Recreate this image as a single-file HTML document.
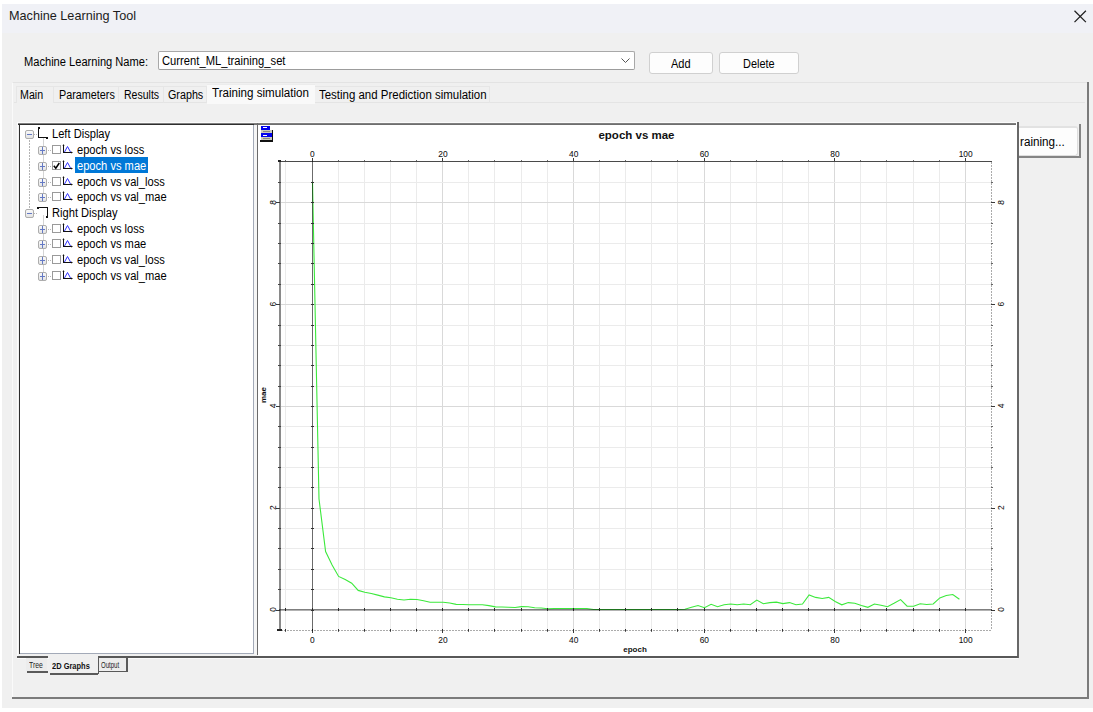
<!DOCTYPE html>
<html><head><meta charset="utf-8">
<style>
html,body{margin:0;padding:0;width:1093px;height:712px;overflow:hidden;background:#fff;position:relative;font-family:"Liberation Sans",sans-serif;}
.a{position:absolute;}
.t{position:absolute;white-space:pre;font-size:12px;line-height:14px;color:#000;}
.tr{transform:scaleX(0.927);transform-origin:0 0}
</style></head><body>
<!-- window -->
<div class="a" style="left:2px;top:4px;width:1091px;height:29px;background:#f0f1f6"></div>
<div class="a" style="left:2px;top:33px;width:1091px;height:675px;background:#f0f0f0"></div>
<div class="t" style="left:9px;top:8.3px;font-size:13px;line-height:16px;transform:scaleX(0.973);transform-origin:0 0;color:#1c1c1c">Machine Learning Tool</div>
<svg class="a" style="left:1072px;top:8px" width="17" height="17" viewBox="0 0 17 17"><path d="M2.5 2.7 L13.9 14.1 M13.9 2.7 L2.5 14.1" stroke="#202020" stroke-width="1.25" fill="none"/></svg>

<!-- name row -->
<div class="t" style="left:23.5px;top:54.6px;transform:scaleX(0.925);transform-origin:0 0">Machine Learning Name:</div>
<div class="a" style="left:158px;top:51px;width:475px;height:17px;background:#fff;border:1px solid #a8a8a8;border-bottom:1.5px solid #9c9c9c;border-radius:2px"></div>
<div class="t" style="left:161.5px;top:53.7px;transform:scaleX(0.935);transform-origin:0 0">Current_ML_training_set</div>
<svg class="a" style="left:620px;top:56px" width="11" height="9"><path d="M1.5 2.5 L5.5 6.5 L9.5 2.5" stroke="#555" stroke-width="1" fill="none"/></svg>
<div class="a" style="left:649px;top:52px;width:62px;height:20px;background:#fdfdfd;border:1px solid #d0d0d0;border-radius:3px"></div>
<div class="t" style="left:671px;top:56.5px;transform:scaleX(0.92);transform-origin:0 0">Add</div>
<div class="a" style="left:719px;top:52px;width:78px;height:20px;background:#fdfdfd;border:1px solid #d0d0d0;border-radius:3px"></div>
<div class="t" style="left:743px;top:56.5px;transform:scaleX(0.91);transform-origin:0 0">Delete</div>

<!-- tab control -->
<div class="a" style="left:12px;top:82px;width:1076px;height:616px;border-top:1px solid #e3e3e3;border-left:1px solid #fafafa"></div>
<div class="a" style="left:1087px;top:82px;width:2px;height:617px;background:#7b7b7b"></div>
<div class="a" style="left:12px;top:697px;width:1077px;height:2px;background:#7b7b7b"></div>
<div class="a" style="left:14px;top:102px;width:1071px;height:1px;background:#e4e4e4"></div>
<!-- tabs -->
<div class="a" style="left:16px;top:86px;width:36px;height:16px;background:#f0f0f0;border-left:1px solid #e6e6e6;border-right:1px solid #e6e6e6;border-top:1px solid #e6e6e6"></div>
<div class="a" style="left:53px;top:86px;width:65px;height:16px;border-right:1px solid #e6e6e6;border-top:1px solid #e6e6e6"></div>
<div class="a" style="left:118px;top:86px;width:45px;height:16px;border-right:1px solid #e6e6e6;border-top:1px solid #e6e6e6"></div>
<div class="a" style="left:163px;top:86px;width:43px;height:16px;border-right:1px solid #e6e6e6;border-top:1px solid #e6e6e6"></div>
<div class="a" style="left:207px;top:84px;width:108px;height:19px;background:#f9f9f9;border-top:1px solid #ececec"></div>
<div class="a" style="left:315px;top:86px;width:174px;height:16px;border-right:1px solid #e6e6e6;border-top:1px solid #e6e6e6"></div>
<div class="t" style="left:19.8px;top:87.6px;transform:scaleX(0.888);transform-origin:0 0">Main</div>
<div class="t" style="left:58.6px;top:87.6px;transform:scaleX(0.90);transform-origin:0 0">Parameters</div>
<div class="t" style="left:123.5px;top:87.6px;transform:scaleX(0.877);transform-origin:0 0">Results</div>
<div class="t" style="left:167.8px;top:87.6px;transform:scaleX(0.895);transform-origin:0 0">Graphs</div>
<div class="t" style="left:212px;top:85.8px;transform:scaleX(0.967);transform-origin:0 0">Training simulation</div>
<div class="t" style="left:318.5px;top:87.5px;transform:scaleX(0.955);transform-origin:0 0">Testing and Prediction simulation</div>

<!-- Training button (behind chart) -->
<div class="a" style="left:1000px;top:124px;width:81px;height:34px;background:#858585"></div>
<div class="a" style="left:1000px;top:124px;width:79px;height:32px;background:#f0f0f0"></div>
<div class="a" style="left:1000px;top:126px;width:76px;height:27px;background:#fdfdfd;border:1px solid #dedede;border-top:2px solid #e2e2e2;border-radius:3px"></div>
<div class="t" style="left:1020px;top:134.5px;transform:scaleX(0.973);transform-origin:0 0">raining...</div>
<!-- tree panel -->
<div class="a" style="left:17px;top:122px;width:1000px;height:1px;background:#fbfbfb"></div>
<div class="a" style="left:17px;top:122px;width:1px;height:536px;background:#fbfbfb"></div>
<div class="a" style="left:18px;top:123px;width:999px;height:1px;background:#808080"></div>
<div class="a" style="left:18px;top:124px;width:236px;height:1px;background:#2e2e2e"></div>
<div class="a" style="left:19px;top:124px;width:1px;height:530px;background:#2e2e2e"></div>
<div class="a" style="left:20px;top:125px;width:233px;height:528px;background:#fff"></div>
<div class="a" style="left:253px;top:125px;width:1px;height:529px;background:#a3aab8"></div>
<div class="a" style="left:20px;top:653px;width:234px;height:1px;background:#a3aab8"></div>
<div class="a" style="left:254px;top:124px;width:3px;height:531px;background:#f5f5f5"></div>
<!--TREE-->
<svg class="a" style="left:0;top:0" width="260" height="300" shape-rendering="crispEdges"><defs><linearGradient id="eg" x1="0" y1="0" x2="0" y2="1"><stop offset="0" stop-color="#fafafa"/><stop offset="1" stop-color="#e2e2e2"/></linearGradient></defs><line x1="29.5" y1="140" x2="29.5" y2="209" stroke="#b4b4b4" stroke-dasharray="2,1"/><rect x="43" y="137" width="1" height="10" fill="#d4d4d4"/><rect x="43" y="152" width="1" height="10" fill="#d4d4d4"/><rect x="43" y="167" width="1" height="11" fill="#d4d4d4"/><rect x="43" y="183" width="1" height="11" fill="#d4d4d4"/><rect x="43" y="215" width="1" height="10" fill="#d4d4d4"/><rect x="43" y="230" width="1" height="11" fill="#d4d4d4"/><rect x="43" y="246" width="1" height="10" fill="#d4d4d4"/><rect x="43" y="261" width="1" height="11" fill="#d4d4d4"/><rect x="25.5" y="130.5" width="8" height="8" rx="1.5" fill="url(#eg)" stroke="#adadad" shape-rendering="auto"/><rect x="27" y="134" width="5" height="1" fill="#6479c4"/><rect x="34" y="134" width="1" height="1" fill="#b8b8b8"/><rect x="36" y="134" width="1" height="1" fill="#b8b8b8"/><path d="M38.5 128 V137.5 H47.5" fill="none" stroke="#111" stroke-width="1"/><rect x="38" y="127" width="2" height="2" fill="#111"/><rect x="46" y="137" width="2" height="2" fill="#111"/><rect x="38.5" y="146.5" width="8" height="8" rx="1.5" fill="url(#eg)" stroke="#adadad" shape-rendering="auto"/><rect x="40" y="150" width="5" height="1" fill="#6479c4"/><rect x="42" y="147" width="1" height="7" fill="#6479c4"/><rect x="48" y="150" width="1" height="1" fill="#b8b8b8"/><rect x="50" y="150" width="1" height="1" fill="#b8b8b8"/><rect x="52.5" y="145.5" width="8" height="8" fill="#fff" stroke="#9a9a9a"/><path d="M63.5 145 V152.5 H71.5" fill="none" stroke="#111" stroke-width="1"/><path d="M62.5 146 L63.5 144 L64.5 146 Z M71 151.5 L73 152.5 L71 153.5 Z" fill="#111" shape-rendering="auto"/><path d="M64.5 152 L67.5 146.5 L70.5 152" fill="none" stroke="#3030ff" stroke-width="1" shape-rendering="auto"/><rect x="38.5" y="162.5" width="8" height="8" rx="1.5" fill="url(#eg)" stroke="#adadad" shape-rendering="auto"/><rect x="40" y="166" width="5" height="1" fill="#6479c4"/><rect x="42" y="163" width="1" height="7" fill="#6479c4"/><rect x="48" y="166" width="1" height="1" fill="#b8b8b8"/><rect x="50" y="166" width="1" height="1" fill="#b8b8b8"/><rect x="52.5" y="161.5" width="8" height="8" fill="#fff" stroke="#9a9a9a"/><path d="M53.8 165.7 L55.8 168.2 L59.3 163" fill="none" stroke="#000" stroke-width="1.5" shape-rendering="auto"/><path d="M63.5 161 V168.5 H71.5" fill="none" stroke="#111" stroke-width="1"/><path d="M62.5 162 L63.5 160 L64.5 162 Z M71 167.5 L73 168.5 L71 169.5 Z" fill="#111" shape-rendering="auto"/><path d="M64.5 168 L67.5 162.5 L70.5 168" fill="none" stroke="#3030ff" stroke-width="1" shape-rendering="auto"/><rect x="38.5" y="178.5" width="8" height="8" rx="1.5" fill="url(#eg)" stroke="#adadad" shape-rendering="auto"/><rect x="40" y="182" width="5" height="1" fill="#6479c4"/><rect x="42" y="179" width="1" height="7" fill="#6479c4"/><rect x="48" y="182" width="1" height="1" fill="#b8b8b8"/><rect x="50" y="182" width="1" height="1" fill="#b8b8b8"/><rect x="52.5" y="177.5" width="8" height="8" fill="#fff" stroke="#9a9a9a"/><path d="M63.5 177 V184.5 H71.5" fill="none" stroke="#111" stroke-width="1"/><path d="M62.5 178 L63.5 176 L64.5 178 Z M71 183.5 L73 184.5 L71 185.5 Z" fill="#111" shape-rendering="auto"/><path d="M64.5 184 L67.5 178.5 L70.5 184" fill="none" stroke="#3030ff" stroke-width="1" shape-rendering="auto"/><rect x="38.5" y="193.5" width="8" height="8" rx="1.5" fill="url(#eg)" stroke="#adadad" shape-rendering="auto"/><rect x="40" y="197" width="5" height="1" fill="#6479c4"/><rect x="42" y="194" width="1" height="7" fill="#6479c4"/><rect x="48" y="197" width="1" height="1" fill="#b8b8b8"/><rect x="50" y="197" width="1" height="1" fill="#b8b8b8"/><rect x="52.5" y="192.5" width="8" height="8" fill="#fff" stroke="#9a9a9a"/><path d="M63.5 192 V199.5 H71.5" fill="none" stroke="#111" stroke-width="1"/><path d="M62.5 193 L63.5 191 L64.5 193 Z M71 198.5 L73 199.5 L71 200.5 Z" fill="#111" shape-rendering="auto"/><path d="M64.5 199 L67.5 193.5 L70.5 199" fill="none" stroke="#3030ff" stroke-width="1" shape-rendering="auto"/><rect x="25.5" y="209.5" width="8" height="8" rx="1.5" fill="url(#eg)" stroke="#adadad" shape-rendering="auto"/><rect x="27" y="213" width="5" height="1" fill="#6479c4"/><rect x="34" y="213" width="1" height="1" fill="#b8b8b8"/><rect x="36" y="213" width="1" height="1" fill="#b8b8b8"/><path d="M38 207.5 H47.5 V216" fill="none" stroke="#111" stroke-width="1"/><rect x="37" y="207" width="2" height="2" fill="#111"/><rect x="46" y="216" width="2" height="2" fill="#111"/><rect x="38.5" y="225.5" width="8" height="8" rx="1.5" fill="url(#eg)" stroke="#adadad" shape-rendering="auto"/><rect x="40" y="229" width="5" height="1" fill="#6479c4"/><rect x="42" y="226" width="1" height="7" fill="#6479c4"/><rect x="48" y="229" width="1" height="1" fill="#b8b8b8"/><rect x="50" y="229" width="1" height="1" fill="#b8b8b8"/><rect x="52.5" y="224.5" width="8" height="8" fill="#fff" stroke="#9a9a9a"/><path d="M63.5 224 V231.5 H71.5" fill="none" stroke="#111" stroke-width="1"/><path d="M62.5 225 L63.5 223 L64.5 225 Z M71 230.5 L73 231.5 L71 232.5 Z" fill="#111" shape-rendering="auto"/><path d="M64.5 231 L67.5 225.5 L70.5 231" fill="none" stroke="#3030ff" stroke-width="1" shape-rendering="auto"/><rect x="38.5" y="240.5" width="8" height="8" rx="1.5" fill="url(#eg)" stroke="#adadad" shape-rendering="auto"/><rect x="40" y="244" width="5" height="1" fill="#6479c4"/><rect x="42" y="241" width="1" height="7" fill="#6479c4"/><rect x="48" y="244" width="1" height="1" fill="#b8b8b8"/><rect x="50" y="244" width="1" height="1" fill="#b8b8b8"/><rect x="52.5" y="239.5" width="8" height="8" fill="#fff" stroke="#9a9a9a"/><path d="M63.5 239 V246.5 H71.5" fill="none" stroke="#111" stroke-width="1"/><path d="M62.5 240 L63.5 238 L64.5 240 Z M71 245.5 L73 246.5 L71 247.5 Z" fill="#111" shape-rendering="auto"/><path d="M64.5 246 L67.5 240.5 L70.5 246" fill="none" stroke="#3030ff" stroke-width="1" shape-rendering="auto"/><rect x="38.5" y="256.5" width="8" height="8" rx="1.5" fill="url(#eg)" stroke="#adadad" shape-rendering="auto"/><rect x="40" y="260" width="5" height="1" fill="#6479c4"/><rect x="42" y="257" width="1" height="7" fill="#6479c4"/><rect x="48" y="260" width="1" height="1" fill="#b8b8b8"/><rect x="50" y="260" width="1" height="1" fill="#b8b8b8"/><rect x="52.5" y="255.5" width="8" height="8" fill="#fff" stroke="#9a9a9a"/><path d="M63.5 255 V262.5 H71.5" fill="none" stroke="#111" stroke-width="1"/><path d="M62.5 256 L63.5 254 L64.5 256 Z M71 261.5 L73 262.5 L71 263.5 Z" fill="#111" shape-rendering="auto"/><path d="M64.5 262 L67.5 256.5 L70.5 262" fill="none" stroke="#3030ff" stroke-width="1" shape-rendering="auto"/><rect x="38.5" y="272.5" width="8" height="8" rx="1.5" fill="url(#eg)" stroke="#adadad" shape-rendering="auto"/><rect x="40" y="276" width="5" height="1" fill="#6479c4"/><rect x="42" y="273" width="1" height="7" fill="#6479c4"/><rect x="48" y="276" width="1" height="1" fill="#b8b8b8"/><rect x="50" y="276" width="1" height="1" fill="#b8b8b8"/><rect x="52.5" y="271.5" width="8" height="8" fill="#fff" stroke="#9a9a9a"/><path d="M63.5 271 V278.5 H71.5" fill="none" stroke="#111" stroke-width="1"/><path d="M62.5 272 L63.5 270 L64.5 272 Z M71 277.5 L73 278.5 L71 279.5 Z" fill="#111" shape-rendering="auto"/><path d="M64.5 278 L67.5 272.5 L70.5 278" fill="none" stroke="#3030ff" stroke-width="1" shape-rendering="auto"/></svg>
<div class="t tr" style="left:52px;top:127.4px">Left Display</div>
<div class="t tr" style="left:77px;top:143.1px">epoch vs loss</div>
<div class="a" style="left:75px;top:157px;width:73px;height:16px;background:#0078d7"></div>
<div class="t tr" style="left:77px;top:158.8px;color:#fff">epoch vs mae</div>
<div class="t tr" style="left:77px;top:174.5px">epoch vs val_loss</div>
<div class="t tr" style="left:77px;top:190.1px">epoch vs val_mae</div>
<div class="t tr" style="left:52px;top:205.8px">Right Display</div>
<div class="t tr" style="left:77px;top:221.5px">epoch vs loss</div>
<div class="t tr" style="left:77px;top:237.1px">epoch vs mae</div>
<div class="t tr" style="left:77px;top:252.8px">epoch vs val_loss</div>
<div class="t tr" style="left:77px;top:268.5px">epoch vs val_mae</div>
<!--/TREE-->
<!-- chart panel -->
<div class="a" style="left:258px;top:125px;width:758px;height:531px;background:#fff"></div>
<div class="a" style="left:254px;top:124px;width:762px;height:1px;background:#6e6e6e"></div>
<div class="a" style="left:257px;top:123px;width:1px;height:532px;background:#6a6a6a"></div>
<div class="a" style="left:1016px;top:122px;width:1px;height:536px;background:#fff"></div><div class="a" style="left:1017px;top:122px;width:2px;height:536px;background:#686868"></div>
<div class="a" style="left:17px;top:656px;width:1001px;height:2px;background:#585858"></div>
<div class="a" style="left:17px;top:658px;width:1001px;height:1px;background:#fafafa"></div>
<!--CHART-->
<svg class="a" style="left:0;top:0" width="1093" height="712" shape-rendering="crispEdges">
<style>.tk{font:8.4px "Liberation Sans",sans-serif;fill:#111;stroke:#111;stroke-width:0.06px}.ti{font:bold 11.5px "Liberation Sans",sans-serif;fill:#111}.al{font:bold 8px "Liberation Sans",sans-serif;fill:#111}</style>
<rect x="285" y="162" width="1" height="468" fill="#ebebeb"/>
<rect x="338" y="162" width="1" height="468" fill="#ebebeb"/>
<rect x="364" y="162" width="1" height="468" fill="#ebebeb"/>
<rect x="390" y="162" width="1" height="468" fill="#ebebeb"/>
<rect x="416" y="162" width="1" height="468" fill="#ebebeb"/>
<rect x="442" y="162" width="1" height="468" fill="#d9d9d9"/>
<rect x="468" y="162" width="1" height="468" fill="#ebebeb"/>
<rect x="494" y="162" width="1" height="468" fill="#ebebeb"/>
<rect x="521" y="162" width="1" height="468" fill="#ebebeb"/>
<rect x="547" y="162" width="1" height="468" fill="#ebebeb"/>
<rect x="573" y="162" width="1" height="468" fill="#d9d9d9"/>
<rect x="599" y="162" width="1" height="468" fill="#ebebeb"/>
<rect x="625" y="162" width="1" height="468" fill="#ebebeb"/>
<rect x="651" y="162" width="1" height="468" fill="#ebebeb"/>
<rect x="677" y="162" width="1" height="468" fill="#ebebeb"/>
<rect x="704" y="162" width="1" height="468" fill="#d9d9d9"/>
<rect x="730" y="162" width="1" height="468" fill="#ebebeb"/>
<rect x="756" y="162" width="1" height="468" fill="#ebebeb"/>
<rect x="782" y="162" width="1" height="468" fill="#ebebeb"/>
<rect x="808" y="162" width="1" height="468" fill="#ebebeb"/>
<rect x="834" y="162" width="1" height="468" fill="#d9d9d9"/>
<rect x="860" y="162" width="1" height="468" fill="#ebebeb"/>
<rect x="886" y="162" width="1" height="468" fill="#ebebeb"/>
<rect x="913" y="162" width="1" height="468" fill="#ebebeb"/>
<rect x="939" y="162" width="1" height="468" fill="#ebebeb"/>
<rect x="965" y="162" width="1" height="468" fill="#d9d9d9"/>
<rect x="281" y="589" width="710" height="1" fill="#ebebeb"/>
<rect x="281" y="569" width="710" height="1" fill="#ebebeb"/>
<rect x="281" y="548" width="710" height="1" fill="#ebebeb"/>
<rect x="281" y="528" width="710" height="1" fill="#ebebeb"/>
<rect x="281" y="508" width="710" height="1" fill="#d9d9d9"/>
<rect x="281" y="487" width="710" height="1" fill="#ebebeb"/>
<rect x="281" y="467" width="710" height="1" fill="#ebebeb"/>
<rect x="281" y="447" width="710" height="1" fill="#ebebeb"/>
<rect x="281" y="426" width="710" height="1" fill="#ebebeb"/>
<rect x="281" y="406" width="710" height="1" fill="#d9d9d9"/>
<rect x="281" y="386" width="710" height="1" fill="#ebebeb"/>
<rect x="281" y="365" width="710" height="1" fill="#ebebeb"/>
<rect x="281" y="345" width="710" height="1" fill="#ebebeb"/>
<rect x="281" y="325" width="710" height="1" fill="#ebebeb"/>
<rect x="281" y="304" width="710" height="1" fill="#d9d9d9"/>
<rect x="281" y="284" width="710" height="1" fill="#ebebeb"/>
<rect x="281" y="263" width="710" height="1" fill="#ebebeb"/>
<rect x="281" y="243" width="710" height="1" fill="#ebebeb"/>
<rect x="281" y="223" width="710" height="1" fill="#ebebeb"/>
<rect x="281" y="202" width="710" height="1" fill="#d9d9d9"/>
<rect x="281" y="182" width="710" height="1" fill="#ebebeb"/>
<rect x="279" y="161" width="713" height="1" fill="#4a4a4a"/>
<rect x="279" y="161" width="2" height="470" fill="#8a8a8a"/>
<line x1="991.5" y1="162" x2="991.5" y2="630" stroke="#ababab" stroke-width="1" stroke-dasharray="2,1"/>
<line x1="281" y1="630.5" x2="991" y2="630.5" stroke="#ababab" stroke-width="1" stroke-dasharray="2,1"/>
<rect x="285" y="160" width="1" height="1" fill="#6a6a6a"/>
<rect x="285" y="631" width="1" height="1" fill="#6a6a6a"/>
<rect x="285" y="629" width="1" height="2" fill="#333"/>
<rect x="312" y="158" width="1" height="3" fill="#3a3a3a"/>
<rect x="312" y="630" width="1" height="3" fill="#3a3a3a"/>
<rect x="312" y="629" width="1" height="2" fill="#333"/>
<rect x="338" y="160" width="1" height="1" fill="#6a6a6a"/>
<rect x="338" y="631" width="1" height="1" fill="#6a6a6a"/>
<rect x="338" y="629" width="1" height="2" fill="#333"/>
<rect x="364" y="160" width="1" height="1" fill="#6a6a6a"/>
<rect x="364" y="631" width="1" height="1" fill="#6a6a6a"/>
<rect x="364" y="629" width="1" height="2" fill="#333"/>
<rect x="390" y="160" width="1" height="1" fill="#6a6a6a"/>
<rect x="390" y="631" width="1" height="1" fill="#6a6a6a"/>
<rect x="390" y="629" width="1" height="2" fill="#333"/>
<rect x="416" y="160" width="1" height="1" fill="#6a6a6a"/>
<rect x="416" y="631" width="1" height="1" fill="#6a6a6a"/>
<rect x="416" y="629" width="1" height="2" fill="#333"/>
<rect x="442" y="158" width="1" height="3" fill="#3a3a3a"/>
<rect x="442" y="630" width="1" height="3" fill="#3a3a3a"/>
<rect x="442" y="629" width="1" height="2" fill="#333"/>
<rect x="468" y="160" width="1" height="1" fill="#6a6a6a"/>
<rect x="468" y="631" width="1" height="1" fill="#6a6a6a"/>
<rect x="468" y="629" width="1" height="2" fill="#333"/>
<rect x="494" y="160" width="1" height="1" fill="#6a6a6a"/>
<rect x="494" y="631" width="1" height="1" fill="#6a6a6a"/>
<rect x="494" y="629" width="1" height="2" fill="#333"/>
<rect x="521" y="160" width="1" height="1" fill="#6a6a6a"/>
<rect x="521" y="631" width="1" height="1" fill="#6a6a6a"/>
<rect x="521" y="629" width="1" height="2" fill="#333"/>
<rect x="547" y="160" width="1" height="1" fill="#6a6a6a"/>
<rect x="547" y="631" width="1" height="1" fill="#6a6a6a"/>
<rect x="547" y="629" width="1" height="2" fill="#333"/>
<rect x="573" y="158" width="1" height="3" fill="#3a3a3a"/>
<rect x="573" y="630" width="1" height="3" fill="#3a3a3a"/>
<rect x="573" y="629" width="1" height="2" fill="#333"/>
<rect x="599" y="160" width="1" height="1" fill="#6a6a6a"/>
<rect x="599" y="631" width="1" height="1" fill="#6a6a6a"/>
<rect x="599" y="629" width="1" height="2" fill="#333"/>
<rect x="625" y="160" width="1" height="1" fill="#6a6a6a"/>
<rect x="625" y="631" width="1" height="1" fill="#6a6a6a"/>
<rect x="625" y="629" width="1" height="2" fill="#333"/>
<rect x="651" y="160" width="1" height="1" fill="#6a6a6a"/>
<rect x="651" y="631" width="1" height="1" fill="#6a6a6a"/>
<rect x="651" y="629" width="1" height="2" fill="#333"/>
<rect x="677" y="160" width="1" height="1" fill="#6a6a6a"/>
<rect x="677" y="631" width="1" height="1" fill="#6a6a6a"/>
<rect x="677" y="629" width="1" height="2" fill="#333"/>
<rect x="704" y="158" width="1" height="3" fill="#3a3a3a"/>
<rect x="704" y="630" width="1" height="3" fill="#3a3a3a"/>
<rect x="704" y="629" width="1" height="2" fill="#333"/>
<rect x="730" y="160" width="1" height="1" fill="#6a6a6a"/>
<rect x="730" y="631" width="1" height="1" fill="#6a6a6a"/>
<rect x="730" y="629" width="1" height="2" fill="#333"/>
<rect x="756" y="160" width="1" height="1" fill="#6a6a6a"/>
<rect x="756" y="631" width="1" height="1" fill="#6a6a6a"/>
<rect x="756" y="629" width="1" height="2" fill="#333"/>
<rect x="782" y="160" width="1" height="1" fill="#6a6a6a"/>
<rect x="782" y="631" width="1" height="1" fill="#6a6a6a"/>
<rect x="782" y="629" width="1" height="2" fill="#333"/>
<rect x="808" y="160" width="1" height="1" fill="#6a6a6a"/>
<rect x="808" y="631" width="1" height="1" fill="#6a6a6a"/>
<rect x="808" y="629" width="1" height="2" fill="#333"/>
<rect x="834" y="158" width="1" height="3" fill="#3a3a3a"/>
<rect x="834" y="630" width="1" height="3" fill="#3a3a3a"/>
<rect x="834" y="629" width="1" height="2" fill="#333"/>
<rect x="860" y="160" width="1" height="1" fill="#6a6a6a"/>
<rect x="860" y="631" width="1" height="1" fill="#6a6a6a"/>
<rect x="860" y="629" width="1" height="2" fill="#333"/>
<rect x="886" y="160" width="1" height="1" fill="#6a6a6a"/>
<rect x="886" y="631" width="1" height="1" fill="#6a6a6a"/>
<rect x="886" y="629" width="1" height="2" fill="#333"/>
<rect x="913" y="160" width="1" height="1" fill="#6a6a6a"/>
<rect x="913" y="631" width="1" height="1" fill="#6a6a6a"/>
<rect x="913" y="629" width="1" height="2" fill="#333"/>
<rect x="939" y="160" width="1" height="1" fill="#6a6a6a"/>
<rect x="939" y="631" width="1" height="1" fill="#6a6a6a"/>
<rect x="939" y="629" width="1" height="2" fill="#333"/>
<rect x="965" y="158" width="1" height="3" fill="#3a3a3a"/>
<rect x="965" y="630" width="1" height="3" fill="#3a3a3a"/>
<rect x="965" y="629" width="1" height="2" fill="#333"/>
<rect x="276" y="610" width="4" height="1" fill="#3a3a3a"/>
<rect x="991" y="610" width="4" height="1" fill="#3a3a3a"/>
<rect x="278" y="589" width="3" height="1" fill="#444"/>
<rect x="991" y="589" width="2" height="1" fill="#666"/>
<rect x="278" y="569" width="3" height="1" fill="#444"/>
<rect x="991" y="569" width="2" height="1" fill="#666"/>
<rect x="278" y="548" width="3" height="1" fill="#444"/>
<rect x="991" y="548" width="2" height="1" fill="#666"/>
<rect x="278" y="528" width="3" height="1" fill="#444"/>
<rect x="991" y="528" width="2" height="1" fill="#666"/>
<rect x="276" y="508" width="4" height="1" fill="#3a3a3a"/>
<rect x="991" y="508" width="4" height="1" fill="#3a3a3a"/>
<rect x="278" y="487" width="3" height="1" fill="#444"/>
<rect x="991" y="487" width="2" height="1" fill="#666"/>
<rect x="278" y="467" width="3" height="1" fill="#444"/>
<rect x="991" y="467" width="2" height="1" fill="#666"/>
<rect x="278" y="447" width="3" height="1" fill="#444"/>
<rect x="991" y="447" width="2" height="1" fill="#666"/>
<rect x="278" y="426" width="3" height="1" fill="#444"/>
<rect x="991" y="426" width="2" height="1" fill="#666"/>
<rect x="276" y="406" width="4" height="1" fill="#3a3a3a"/>
<rect x="991" y="406" width="4" height="1" fill="#3a3a3a"/>
<rect x="278" y="386" width="3" height="1" fill="#444"/>
<rect x="991" y="386" width="2" height="1" fill="#666"/>
<rect x="278" y="365" width="3" height="1" fill="#444"/>
<rect x="991" y="365" width="2" height="1" fill="#666"/>
<rect x="278" y="345" width="3" height="1" fill="#444"/>
<rect x="991" y="345" width="2" height="1" fill="#666"/>
<rect x="278" y="325" width="3" height="1" fill="#444"/>
<rect x="991" y="325" width="2" height="1" fill="#666"/>
<rect x="276" y="304" width="4" height="1" fill="#3a3a3a"/>
<rect x="991" y="304" width="4" height="1" fill="#3a3a3a"/>
<rect x="278" y="284" width="3" height="1" fill="#444"/>
<rect x="991" y="284" width="2" height="1" fill="#666"/>
<rect x="278" y="263" width="3" height="1" fill="#444"/>
<rect x="991" y="263" width="2" height="1" fill="#666"/>
<rect x="278" y="243" width="3" height="1" fill="#444"/>
<rect x="991" y="243" width="2" height="1" fill="#666"/>
<rect x="278" y="223" width="3" height="1" fill="#444"/>
<rect x="991" y="223" width="2" height="1" fill="#666"/>
<rect x="276" y="202" width="4" height="1" fill="#3a3a3a"/>
<rect x="991" y="202" width="4" height="1" fill="#3a3a3a"/>
<rect x="278" y="182" width="3" height="1" fill="#444"/>
<rect x="991" y="182" width="2" height="1" fill="#666"/>
<rect x="277" y="629" width="5" height="2" fill="#222"/>
<rect x="278" y="160" width="3" height="2" fill="#222"/>
<text x="312.3" y="157" text-anchor="middle" class="tk">0</text>
<text x="312.3" y="642.5" text-anchor="middle" class="tk">0</text>
<text x="443.0" y="157" text-anchor="middle" class="tk">20</text>
<text x="443.0" y="642.5" text-anchor="middle" class="tk">20</text>
<text x="573.7" y="157" text-anchor="middle" class="tk">40</text>
<text x="573.7" y="642.5" text-anchor="middle" class="tk">40</text>
<text x="704.3" y="157" text-anchor="middle" class="tk">60</text>
<text x="704.3" y="642.5" text-anchor="middle" class="tk">60</text>
<text x="835.0" y="157" text-anchor="middle" class="tk">80</text>
<text x="835.0" y="642.5" text-anchor="middle" class="tk">80</text>
<text x="965.7" y="157" text-anchor="middle" class="tk">100</text>
<text x="965.7" y="642.5" text-anchor="middle" class="tk">100</text>
<text transform="translate(275.5 609.5) rotate(-90)" x="0" y="0" text-anchor="middle" class="tk">0</text>
<text transform="translate(1003.5 609.5) rotate(-90)" x="0" y="0" text-anchor="middle" class="tk">0</text>
<text transform="translate(275.5 507.7) rotate(-90)" x="0" y="0" text-anchor="middle" class="tk">2</text>
<text transform="translate(1003.5 507.7) rotate(-90)" x="0" y="0" text-anchor="middle" class="tk">2</text>
<text transform="translate(275.5 405.9) rotate(-90)" x="0" y="0" text-anchor="middle" class="tk">4</text>
<text transform="translate(1003.5 405.9) rotate(-90)" x="0" y="0" text-anchor="middle" class="tk">4</text>
<text transform="translate(275.5 304.2) rotate(-90)" x="0" y="0" text-anchor="middle" class="tk">6</text>
<text transform="translate(1003.5 304.2) rotate(-90)" x="0" y="0" text-anchor="middle" class="tk">6</text>
<text transform="translate(275.5 202.4) rotate(-90)" x="0" y="0" text-anchor="middle" class="tk">8</text>
<text transform="translate(1003.5 202.4) rotate(-90)" x="0" y="0" text-anchor="middle" class="tk">8</text>
<text x="636.5" y="139" text-anchor="middle" class="ti">epoch vs mae</text>
<text x="635" y="651.5" text-anchor="middle" class="al">epoch</text>
<text transform="translate(265.7 395) rotate(-90)" text-anchor="middle" class="al">mae</text>
<polyline points="312.5,181.8 319.0,499.0 325.6,551.6 332.1,565.0 338.6,576.4 345.2,579.5 351.7,583.2 358.2,590.4 364.8,592.2 371.3,593.5 377.8,595.1 384.4,596.9 390.9,597.7 397.4,599.3 404.0,600.0 410.5,599.3 417.0,599.5 423.6,600.7 430.1,602.2 436.6,602.2 443.2,602.2 449.7,603.0 456.2,604.4 462.8,604.5 469.3,604.8 475.9,604.8 482.4,604.8 488.9,605.6 495.5,606.9 502.0,607.0 508.5,607.2 515.1,607.5 521.6,606.6 528.1,606.7 534.7,607.8 541.2,608.0 547.7,608.8 554.3,608.5 560.8,608.5 567.3,608.5 573.9,608.5 580.4,608.5 586.9,608.5 593.5,609.5 600.0,609.5 606.5,609.5 613.1,609.5 619.6,609.5 626.1,609.5 632.7,609.5 639.2,609.5 645.7,609.5 652.3,609.5 658.8,609.5 665.3,609.5 671.9,609.5 678.4,609.5 684.9,609.2 691.5,607.3 698.0,605.5 704.5,607.7 711.1,604.3 717.6,606.7 724.1,604.8 730.7,604.0 737.2,604.8 743.7,604.0 750.3,604.8 756.8,600.1 763.3,603.7 769.9,602.6 776.4,602.1 782.9,603.6 789.5,602.6 796.0,604.8 802.5,604.0 809.1,595.0 815.6,597.4 822.2,598.5 828.7,597.4 835.2,601.5 841.8,604.8 848.3,602.6 854.8,603.3 861.4,605.5 867.9,607.3 874.4,604.0 881.0,605.2 887.5,606.7 894.0,603.3 900.6,599.6 907.1,606.2 913.6,606.2 920.2,603.7 926.7,604.5 933.2,604.0 939.8,597.9 946.3,595.5 952.8,594.5 959.4,599.3" fill="none" stroke="#3ce93c" stroke-width="1.1" shape-rendering="auto"/>
<rect x="312" y="161" width="1" height="470" fill="rgba(0,0,0,0.58)"/>
<rect x="279" y="609" width="713" height="1" fill="rgba(0,0,0,0.5)"/>
<rect x="279" y="610" width="713" height="1" fill="rgba(0,0,0,0.3)"/>
<rect x="285" y="608" width="1" height="3" fill="#2a2a2a"/>
<rect x="312" y="608" width="1" height="3" fill="#2a2a2a"/>
<rect x="338" y="608" width="1" height="3" fill="#2a2a2a"/>
<rect x="364" y="608" width="1" height="3" fill="#2a2a2a"/>
<rect x="390" y="608" width="1" height="3" fill="#2a2a2a"/>
<rect x="416" y="608" width="1" height="3" fill="#2a2a2a"/>
<rect x="442" y="608" width="1" height="3" fill="#2a2a2a"/>
<rect x="468" y="608" width="1" height="3" fill="#2a2a2a"/>
<rect x="494" y="608" width="1" height="3" fill="#2a2a2a"/>
<rect x="521" y="608" width="1" height="3" fill="#2a2a2a"/>
<rect x="547" y="608" width="1" height="3" fill="#2a2a2a"/>
<rect x="573" y="608" width="1" height="3" fill="#2a2a2a"/>
<rect x="599" y="608" width="1" height="3" fill="#2a2a2a"/>
<rect x="625" y="608" width="1" height="3" fill="#2a2a2a"/>
<rect x="651" y="608" width="1" height="3" fill="#2a2a2a"/>
<rect x="677" y="608" width="1" height="3" fill="#2a2a2a"/>
<rect x="704" y="608" width="1" height="3" fill="#2a2a2a"/>
<rect x="730" y="608" width="1" height="3" fill="#2a2a2a"/>
<rect x="756" y="608" width="1" height="3" fill="#2a2a2a"/>
<rect x="782" y="608" width="1" height="3" fill="#2a2a2a"/>
<rect x="808" y="608" width="1" height="3" fill="#2a2a2a"/>
<rect x="834" y="608" width="1" height="3" fill="#2a2a2a"/>
<rect x="860" y="608" width="1" height="3" fill="#2a2a2a"/>
<rect x="886" y="608" width="1" height="3" fill="#2a2a2a"/>
<rect x="913" y="608" width="1" height="3" fill="#2a2a2a"/>
<rect x="939" y="608" width="1" height="3" fill="#2a2a2a"/>
<rect x="965" y="608" width="1" height="3" fill="#2a2a2a"/>
<rect x="311" y="610" width="3" height="1" fill="#333"/>
<rect x="311" y="589" width="3" height="1" fill="#333"/>
<rect x="311" y="569" width="3" height="1" fill="#333"/>
<rect x="311" y="548" width="3" height="1" fill="#333"/>
<rect x="311" y="528" width="3" height="1" fill="#333"/>
<rect x="311" y="508" width="3" height="1" fill="#333"/>
<rect x="311" y="487" width="3" height="1" fill="#333"/>
<rect x="311" y="467" width="3" height="1" fill="#333"/>
<rect x="311" y="447" width="3" height="1" fill="#333"/>
<rect x="311" y="426" width="3" height="1" fill="#333"/>
<rect x="311" y="406" width="3" height="1" fill="#333"/>
<rect x="311" y="386" width="3" height="1" fill="#333"/>
<rect x="311" y="365" width="3" height="1" fill="#333"/>
<rect x="311" y="345" width="3" height="1" fill="#333"/>
<rect x="311" y="325" width="3" height="1" fill="#333"/>
<rect x="311" y="304" width="3" height="1" fill="#333"/>
<rect x="311" y="284" width="3" height="1" fill="#333"/>
<rect x="311" y="263" width="3" height="1" fill="#333"/>
<rect x="311" y="243" width="3" height="1" fill="#333"/>
<rect x="311" y="223" width="3" height="1" fill="#333"/>
<rect x="311" y="202" width="3" height="1" fill="#333"/>
<rect x="311" y="182" width="3" height="1" fill="#333"/>
<rect x="260" y="140" width="13" height="2" fill="#111"/>
<rect x="272" y="130" width="1" height="12" fill="#111"/>
<rect x="261" y="130" width="11" height="10" fill="#c9c9bf"/>
<rect x="263" y="131" width="7" height="1" fill="#8a8a80"/>
<rect x="263" y="138" width="7" height="1" fill="#8a8a80"/>
<rect x="261" y="126" width="9" height="4" fill="#0000ee"/>
<rect x="263" y="127" width="4" height="1" fill="#fff"/>
<rect x="261" y="133" width="11" height="4" fill="#0000ee"/>
<rect x="263" y="135" width="4" height="1" fill="#fff"/>
</svg>
<!--/CHART-->
<!-- bottom tabs -->
<div class="a" style="left:48px;top:656px;width:50px;height:2px;background:#f0f0f0"></div>
<div class="a" style="left:26px;top:658px;width:21px;height:13px;background:#ececec"></div>
<div class="a" style="left:27px;top:671px;width:21px;height:1.5px;background:#5a5a5a"></div>
<div class="a" style="left:49px;top:658px;width:49px;height:15px;background:#f0f0f0"></div>
<div class="a" style="left:50px;top:673px;width:48px;height:1.5px;background:#5a5a5a"></div>
<div class="a" style="left:97.5px;top:657px;width:1.5px;height:17px;background:#5a5a5a"></div>
<div class="a" style="left:99px;top:658px;width:27px;height:12px;background:#ececec"></div>
<div class="a" style="left:99px;top:670.5px;width:28.5px;height:1.5px;background:#5a5a5a"></div>
<div class="a" style="left:126px;top:657px;width:1.5px;height:14px;background:#5a5a5a"></div>
<div class="t" style="left:29.2px;top:660.3px;font-size:8.5px;line-height:10px;transform:scaleX(0.8);transform-origin:0 0;color:#222">Tree</div>
<div class="t" style="left:52px;top:660.5px;font-size:8.6px;line-height:10px;font-weight:bold;transform:scaleX(0.87);transform-origin:0 0;color:#111">2D Graphs</div>
<div class="t" style="left:100.9px;top:660.3px;font-size:8.5px;line-height:10px;transform:scaleX(0.71);transform-origin:0 0;color:#222">Output</div>

</body></html>
